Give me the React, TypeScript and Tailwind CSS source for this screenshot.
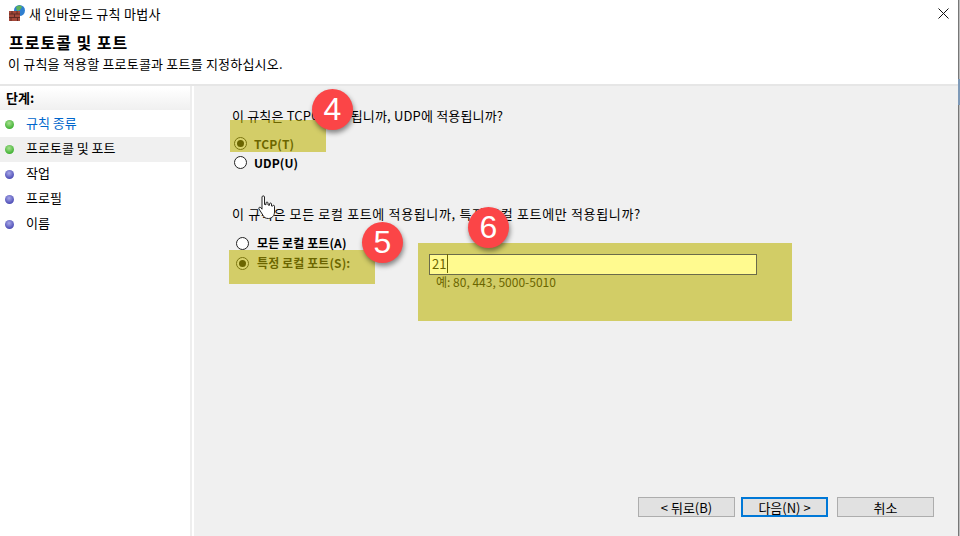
const font = { fontFamily: '"Noto Sans CJK KR", "Noto Sans", sans-serif' };

const steps = [
  { label: "규칙 종류", done: true, link: true },
  { label: "프로토콜 및 포트", done: true, active: true },
  { label: "작업" },
  { label: "프로필" },
  { label: "이름" },
];

function FirewallIcon() {
  return (
    <svg width="18" height="18" viewBox="0 0 18 18" className="shrink-0">
      <circle cx="11.5" cy="6.5" r="5.5" fill="#2f7fd0" />
      <path d="M8 3c2-2 5-2 6 0l-2 3-3 1z" fill="#5fb35a" />
      <rect x="1" y="7" width="11" height="10" fill="#a5483a" />
      <path d="M1 10h11M1 13.5h11M4 7v3M9 7v3M6.500 10v3.500M3 13.500v3.500M9.500 13.500v3.500" stroke="#5e2a22" strokeWidth="1" fill="none" />
    </svg>
  );
}

function Dot({ done }: { done?: boolean }) {
  return (
    <span
      className={`w-[9px] h-[9px] rounded-full shrink-0 translate-y-[2px] ${
        done
          ? "bg-[radial-gradient(circle_at_45%_35%,#a8e090,#3cb030_75%)]"
          : "bg-[radial-gradient(circle_at_45%_35%,#a8a8e8,#4a4ab4_75%)]"
      }`}
    />
  );
}

function Radio({ checked, label, tall }: { checked?: boolean; label: string; tall?: boolean }) {
  return (
    <div className={`flex items-center ${tall ? "h-[20px] gap-[8px]" : "h-[19px] gap-[7px]"}`}>
      <span className="w-[13px] h-[13px] rounded-full border border-[#222] bg-white flex items-center justify-center">
        {checked && <span className="w-[7px] h-[7px] rounded-full bg-black" />}
      </span>
      <span className="text-[12px] font-bold text-black leading-none tracking-[0.1px]">{label}</span>
    </div>
  );
}

function Badge({ n, className }: { n: number; className: string }) {
  return (
    <div
      className={`absolute w-[41px] h-[41px] rounded-full bg-[#fb4547] text-white text-[32px] leading-[40px] text-center shadow-[1px_3px_5px_rgba(0,0,0,0.45)] z-20 ${className}`}
      style={{ fontFamily: '"Liberation Sans", sans-serif' }}
    >
      {n}
    </div>
  );
}

function Button({ label, primary }: { label: string; primary?: boolean }) {
  return (
    <button
      className={`h-[20px] bg-[#e1e1e1] text-[13px] leading-none text-black ${
        primary ? "w-[87px] border-2 border-[#0078d7]" : "w-[97px] border border-[#adadad]"
      }`}
    >
      {label}
    </button>
  );
}

export default function App() {
  return (
    <div className="w-[960px] h-[536px] bg-white flex flex-col overflow-hidden relative text-black" style={font}>
      {/* Title + header */}
      <div className="h-[84px] shrink-0 relative">
        <div className="flex items-center gap-[3px] pl-[8px] h-[26px]">
          <FirewallIcon />
          <span className="text-[13px] leading-none tracking-[0.25px]">새 인바운드 규칙 마법사</span>
        </div>
        <svg width="11" height="11" viewBox="0 0 11 11" className="absolute left-[938px] top-[8px]">
          <path d="M0.500 0.500L10.500 10.500M10.500 0.500L0.500 10.500" stroke="#111" strokeWidth="1" />
        </svg>
        <div className="pl-[9px] pt-[6px] text-[16px] font-bold leading-[20px] tracking-[1px]">프로토콜 및 포트</div>
        <div className="pl-[8px] pt-[4px] text-[13px] leading-[16px] tracking-[0.2px]">이 규칙을 적용할 프로토콜과 포트를 지정하십시오.</div>
      </div>
      <div className="h-[2px] bg-[#e6e6e6] shrink-0" />

      <div className="flex flex-1 min-h-0">
        {/* Steps */}
        <div className="w-[192px] shrink-0 border-r-2 border-[#eeeeee]">
          <div className="h-[22px] mt-[2px] bg-gradient-to-b from-white to-[#f0f0f0] pl-[6px] text-[13px] font-bold leading-[19px]">단계:</div>
          <div className="pt-[2px]">
            {steps.map((s) => (
              <div
                key={s.label}
                className={`h-[25px] flex items-center gap-[12px] pl-[5px] pb-[4px] text-[13px] leading-none ${
                  s.active ? "bg-[#f0f0f0]" : ""
                } ${s.link ? "text-[#0066cc]" : ""}`}
              >
                <Dot done={s.done} />
                {s.label}
              </div>
            ))}
          </div>
        </div>

        {/* Page */}
        <div className="flex-1 bg-[#f0f0f0] ml-[2px] mr-[2px] relative pl-[38px] pt-[22px]">
          <div className="text-[13px] leading-[16px] tracking-[0.17px]">이 규칙은 TCP에 적용됩니까, UDP에 적용됩니까?</div>
          <div className="pl-[2px] pt-[10px]">
            <Radio checked label="TCP(T)" />
            <Radio label="UDP(U)" />
          </div>
          <div className="text-[13px] leading-[16px] mt-[34px] tracking-[0.65px]">이 규칙은 모든 로컬 포트에 적용됩니까, 특정 로컬 포트에만 적용됩니까?</div>
          <div className="flex pl-[4px] pt-[11px]">
            <div className="w-[193px] shrink-0">
              <Radio tall label="모든 로컬 포트(A)" />
              <Radio tall checked label="특정 로컬 포트(S):" />
            </div>
            <div className="pt-[21px] relative z-10">
              <div className="w-[328px] h-[21px] border border-[#6b6b4a] bg-[#fffa8f] pl-[2px] text-[13px] leading-[18px] text-[#6b6500]">
                21<span className="border-l border-[#6b6500] ml-[1px]" />
              </div>
              <div className="pl-[7px] text-[12px] leading-[14px] text-[#6b6500]">예: 80, 443, 5000-5010</div>
            </div>
          </div>

          {/* Buttons */}
          <div className="absolute left-[444px] top-[411px] flex">
            <Button label="< 뒤로(B)" />
            <div className="w-[6px]" />
            <Button primary label="다음(N) >" />
            <div className="w-[9px]" />
            <Button label="취소" />
          </div>
        </div>
      </div>

      {/* Edge of the window behind the dialog */}
      <div className="absolute right-0 top-0 bottom-0 w-[2px] border-l border-[#777777] bg-[#bdbdbd]" />
      <div className="absolute right-0 top-[79px] h-[26px] w-[2px] bg-[#7f9ab8]" />

      {/* Annotations on top of the screenshot */}
      <div className="absolute left-[230px] top-[120px] w-[96px] h-[32px] bg-[#bcb100]/57" />
      <div className="absolute left-[229px] top-[250px] w-[146px] h-[34px] bg-[#bcb100]/57" />
      <div className="absolute left-[418px] top-[243px] w-[374px] h-[78px] bg-[#d2cd66]" />
      <Badge n={4} className="left-[312px] top-[89px]" />
      <Badge n={5} className="left-[362px] top-[222px]" />
      <Badge n={6} className="left-[468px] top-[207px]" />
      <svg width="18" height="25" viewBox="0 0 18 25" className="absolute left-[258px] top-[195px] z-20">
        <path
          d="M4 2c0-1.500 2.500-1.500 2.500 0v7.500l1.500.2V8c0-1.300 2-1.300 2 0v2l1.500.3V9c0-1.300 2-1.300 2 0v2l1 .2c0-1.200 2-1.200 2 0V17c0 3.500-2.500 6.500-6 6.500-3 0-4.500-1-5.500-3.200L1 14c-.8-1.300.8-2.500 1.800-1.400L4 14.200z"
          fill="#fff"
          stroke="#222"
          strokeWidth="1"
        />
      </svg>
    </div>
  );
}
